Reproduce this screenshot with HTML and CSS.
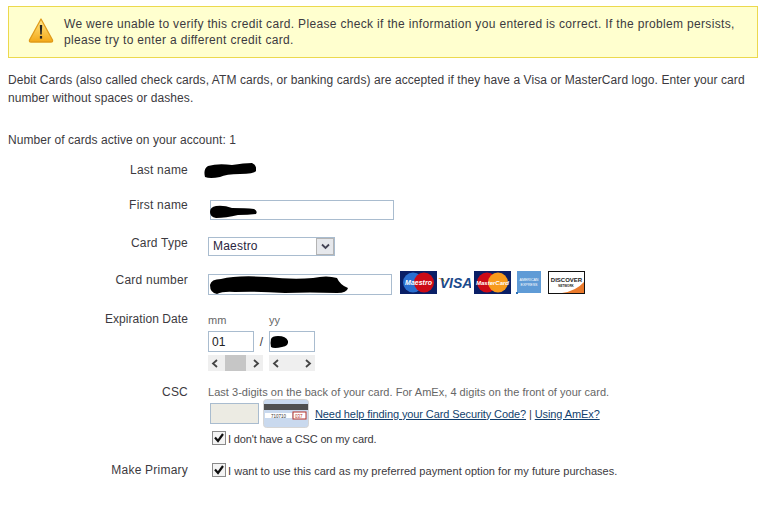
FILE: index.html
```html
<!DOCTYPE html>
<html>
<head>
<meta charset="utf-8">
<title>Add credit card</title>
<link rel="stylesheet" href="styles.css">
</head>
<body>
<div class="alert">
  <svg class="alert_icon" width="26" height="26" viewBox="0 0 26 26">
    <defs><linearGradient id="warn" x1="0" y1="0" x2="0" y2="1"><stop offset="0" stop-color="#ffe98a"/><stop offset="1" stop-color="#f4a817"/></linearGradient></defs>
    <path d="M13 2 L24.5 23 Q25 25 23 25 H3 Q1 25 1.5 23 Z" fill="url(#warn)" stroke="#e09a1a" stroke-width="1.3" stroke-linejoin="round"/>
    <path d="M11.8 8 H14.2 L13.7 17.5 H12.3 Z" fill="#222"/>
    <rect x="11.9" y="19" width="2.2" height="2.6" fill="#222"/>
  </svg>
  <p>We were unable to verify this credit card. Please check if the information you entered is correct. If the problem persists, please try to enter a different credit card.</p>
</div>

<p class="intro">Debit Cards (also called check cards, ATM cards, or banking cards) are accepted if they have a Visa or MasterCard logo. Enter your card number without spaces or dashes.</p>
<p class="count">Number of cards active on your account: 1</p>

<div class="row row_last">
  <div class="label">Last name</div>
  <div class="field">
    <svg class="scribble scribble_last" width="52" height="15" viewBox="0 0 52 15"><path d="M1 14 Q-1 6 4 3 Q14 0 28 2 Q40 0 48 0 Q53 2 52 8 Q50 11 36 11 Q22 11 16 14 Q6 16 1 14 Z"/></svg>
  </div>
</div>
<div class="row row_first">
  <div class="label">First name</div>
  <div class="field field_first">
    <input class="text_in in_first" type="text">
    <svg class="scribble scribble_first" width="47" height="13" viewBox="0 0 47 13"><path d="M0 7 Q0 2 6 1 Q14 0 22 3 Q36 3 44 4 Q48 6 46 9 Q38 10 28 10 Q16 13 6 13 Q0 12 0 7 Z"/></svg>
  </div>
</div>
<div class="row row_type">
  <div class="label">Card Type</div>
  <div class="field field_type">
    <div class="select">
      <span class="select_val">Maestro</span>
      <span class="select_btn"><svg width="9" height="7" viewBox="0 0 9 7"><path d="M1 1.5 L4.5 5 L8 1.5" fill="none" stroke="#445" stroke-width="1.8"/></svg></span>
    </div>
  </div>
</div>
<div class="row row_number">
  <div class="label">Card number</div>
  <div class="field field_number">
    <input class="text_in in_number" type="text">
    <svg class="scribble scribble_number" width="140" height="20" viewBox="0 0 140 20"><path d="M1 10 Q2 4 12 4 Q28 0 58 2 Q84 5 104 3 Q118 0 128 3 Q131 10 139 13 Q138 18 128 18 Q100 17 76 18 Q48 16 26 17 Q14 16 8 19 Q1 18 1 10 Z"/></svg>
    <div class="logos">
      <svg width="37" height="23" viewBox="0 0 37 23">
        <rect width="37" height="23" fill="#0a1f66"/>
        <circle cx="13" cy="11.5" r="10" fill="#2a6fd0"/><circle cx="24" cy="11.5" r="10" fill="#cc0a16"/>
        <text x="18.5" y="14" class="logo_txt" font-size="7" fill="#fff" text-anchor="middle">Maestro</text>
      </svg>
      <svg class="logo_vs" width="33" height="23" viewBox="0 0 33 23">
        <path d="M0 7 L5 7 L7 11 Z" fill="#f0a81e"/>
        <text x="18" y="17" class="logo_visa">VISA</text>
      </svg>
      <svg class="logo_mc" width="37" height="23" viewBox="0 0 37 23">
        <rect width="37" height="23" fill="#0a1f66"/>
        <circle cx="13" cy="11.5" r="10" fill="#cc0a16"/><circle cx="24" cy="11.5" r="10" fill="#f79a1c"/>
        <text x="18.5" y="14" class="logo_txt" font-size="6" fill="#fff" text-anchor="middle">MasterCard</text>
      </svg>
      <svg class="logo_amex" width="26" height="23" viewBox="0 0 26 23">
        <rect x="1" width="24" height="22" fill="#5f9bd6"/>
        <rect x="0" y="21" width="2" height="2" fill="#2a6fb5"/>
        <text x="13" y="10" font-size="3.6" fill="#fff" text-anchor="middle" class="logo_plain">AMERICAN</text>
        <text x="13" y="15" font-size="3.6" fill="#fff" text-anchor="middle" class="logo_plain">EXPRESS</text>
      </svg>
      <svg class="logo_disc" width="37" height="23" viewBox="0 0 37 23">
        <rect x="0.5" y="0.5" width="36" height="22" fill="#fff" stroke="#111"/>
        <path d="M36 11 V22 H14 Q28 20 36 11 Z" fill="#ea7a2c"/>
        <text x="18.5" y="11" font-size="6" font-weight="bold" fill="#222" text-anchor="middle" class="logo_plain">DISCOVER</text>
        <text x="18" y="16" font-size="3" font-weight="bold" fill="#222" text-anchor="middle" class="logo_plain">NETWORK</text>
      </svg>
    </div>
  </div>
</div>
<div class="row row_exp">
  <div class="label label_exp">Expiration Date</div>
  <div class="field">
    <div class="exp_heads"><span class="small_text exp_mm">mm</span><span class="small_text">yy</span></div>
    <div class="exp_inputs">
      <input class="text_in in_exp" type="text" value="01">
      <span class="slash">/</span>
      <div class="yy_wrap">
        <input class="text_in in_exp" type="text">
        <svg class="scribble scribble_yy" width="19" height="13" viewBox="0 0 19 13"><path d="M1 3 Q2 0 8 0 Q16 0 18 5 Q19 10 12 11 Q4 13 1 11 Q0 7 1 3 Z"/></svg>
      </div>
    </div>
    <div class="exp_bars">
      <div class="hbar hbar_mm">
        <svg width="8" height="9" viewBox="0 0 8 9"><path d="M6 1 L2 4.5 L6 8" fill="none" stroke="#444" stroke-width="1.8"/></svg>
        <span class="hbar_thumb"></span>
        <svg width="8" height="9" viewBox="0 0 8 9"><path d="M2 1 L6 4.5 L2 8" fill="none" stroke="#444" stroke-width="1.8"/></svg>
      </div>
      <div class="hbar hbar_yy">
        <svg width="8" height="9" viewBox="0 0 8 9"><path d="M6 1 L2 4.5 L6 8" fill="none" stroke="#444" stroke-width="1.8"/></svg>
        <svg width="8" height="9" viewBox="0 0 8 9"><path d="M2 1 L6 4.5 L2 8" fill="none" stroke="#444" stroke-width="1.8"/></svg>
      </div>
    </div>
  </div>
</div>
<div class="row row_csc">
  <div class="label">CSC</div>
  <div class="field">
    <div class="small_text csc_hint">Last 3-digits on the back of your card. For AmEx, 4 digits on the front of your card.</div>
    <div class="csc_line">
      <input class="text_in in_csc" type="text" disabled>
      <svg class="csc_card" width="46" height="29" viewBox="0 0 46 29">
        <rect x="0.5" y="0.5" width="45" height="28" rx="3" fill="#c9d9ee" stroke="#d5d5d5"/>
        <rect x="1" y="5" width="44" height="6" fill="#505050"/>
        <rect x="2" y="14" width="27" height="5" fill="#fff"/>
        <text x="8" y="18.5" class="logo_plain" font-size="4.5" fill="#333">710710</text>
        <rect x="30" y="13" width="13" height="7" fill="#fff" stroke="#b5322a"/>
        <text x="32" y="18.5" class="logo_plain" font-size="4.5" fill="#b5322a">037</text>
      </svg>
      <span class="csc_links"><a href="#">Need help finding your Card Security Code?</a> | <a href="#">Using AmEx?</a></span>
    </div>
    <div class="check_line">
      <svg class="check" width="14" height="14" viewBox="0 0 14 14"><rect x="0.5" y="0.5" width="13" height="13" fill="#f4f4f4" stroke="#8a8a8a"/><path d="M3 6.5 L6 10 L11 3" fill="none" stroke="#111" stroke-width="2.2"/></svg>
      <span class="check_txt check_csc">I don't have a CSC on my card.</span>
    </div>
  </div>
</div>
<div class="row">
  <div class="label">Make Primary</div>
  <div class="field">
    <div class="check_line check_primary">
      <svg class="check" width="14" height="14" viewBox="0 0 14 14"><rect x="0.5" y="0.5" width="13" height="13" fill="#f4f4f4" stroke="#8a8a8a"/><path d="M3 6.5 L6 10 L11 3" fill="none" stroke="#111" stroke-width="2.2"/></svg>
      <span class="check_txt">I want to use this card as my preferred payment option for my future purchases.</span>
    </div>
  </div>
</div>
</body>
</html>
```

FILE: styles.css
```css
body {
	margin: 0;
	padding: 6px 8px 0 8px;
	font-family: "Liberation Sans", Arial, sans-serif;
	font-size: 12px;
	color: #3c3a40;
	background: #fff;
}
p {
	margin: 0;
}
.alert {
	display: flex;
	align-items: center;
	box-sizing: border-box;
	width: 750px;
	height: 52px;
	padding: 0 8px 0 19px;
	border: 1px solid #ecd94e;
	background: #ffffcf;
}
.alert_icon {
	flex: none;
	margin-top: -5px;
}
.alert p {
	margin-left: 10px;
	line-height: 16px;
	letter-spacing: 0.33px;
}
.intro {
	margin-top: 13px;
	line-height: 18px;
	letter-spacing: 0.08px;
	width: 745px;
}
.count {
	margin-top: 25px;
	line-height: 16px;
	letter-spacing: 0.06px;
}
.row {
	display: flex;
	align-items: flex-start;
}
.label {
	width: 180px;
	margin-right: 20px;
	text-align: right;
	line-height: 16px;
	letter-spacing: 0.22px;
	flex: none;
}
.label_exp {
	letter-spacing: 0.07px;
}
.field {
	position: relative;
	flex: none;
}
.row_last {
	margin-top: 14px;
	margin-bottom: 19px;
	height: 16px;
}
.row_first {
	margin-bottom: 15px;
}
.row_type, .row_number {
	margin-bottom: 16px;
}
.row_exp {
	margin-bottom: 13px;
}
.row_csc {
	margin-bottom: 16px;
}
.field_first {
	padding: 3px 0 0 2px;
}
.field_type, .field_number {
	display: flex;
	padding-top: 2px;
}
.text_in {
	display: block;
	box-sizing: border-box;
	margin: 0;
	padding: 0 3px;
	border: 1px solid #a9bccf;
	font-family: inherit;
	font-size: 12px;
	color: #222;
	background: #fff;
}
.in_first {
	width: 184px;
	height: 20px;
}
.in_number {
	width: 184px;
	height: 21px;
}
.in_exp {
	width: 46px;
	height: 21px;
}
.in_csc {
	width: 49px;
	height: 21px;
	margin-left: 2px;
	background: #ecebe3;
}
.scribble {
	position: absolute;
	fill: #000;
}
.scribble_last {
	left: -4px;
	top: 1px;
}
.scribble_first {
	left: 2px;
	top: 8px;
}
.scribble_number {
	left: 1px;
	top: 3px;
}
.scribble_yy {
	left: 1px;
	top: 5px;
}
.select {
	display: flex;
	box-sizing: border-box;
	width: 127px;
	height: 19px;
	border: 1px solid #a9bccf;
}
.select_val {
	flex: 1;
	padding-left: 4px;
	line-height: 17px;
	color: #2a2540;
	letter-spacing: 0.2px;
}
.select_btn {
	display: flex;
	align-items: center;
	justify-content: center;
	width: 16px;
	border: 1px solid #b4b4b4;
	background: #e6e8ec;
}
.logos {
	display: flex;
	margin: -3px 0 0 8px;
}
.logos svg {
	display: block;
	flex: none;
}
.logos .logo_vs {
	margin-left: 1px;
}
.logos .logo_mc {
	margin-left: 3px;
}
.logos .logo_amex {
	margin-left: 5px;
}
.logos .logo_disc {
	margin-left: 6px;
}
.logo_txt {
	font-family: "Liberation Sans", Arial, sans-serif;
	font-weight: bold;
	font-style: italic;
}
.logo_plain {
	font-family: "Liberation Sans", Arial, sans-serif;
}
.logo_visa {
	font-family: "Liberation Sans", Arial, sans-serif;
	font-size: 14px;
	font-weight: bold;
	font-style: italic;
	fill: #1a4a8c;
	text-anchor: middle;
}
.small_text {
	font-size: 11px;
	color: #666;
}
.exp_heads {
	display: flex;
	height: 20px;
	padding-top: 1px;
	box-sizing: border-box;
	line-height: 16px;
}
.exp_mm {
	width: 61px;
}
.exp_inputs {
	display: flex;
	align-items: center;
}
.slash {
	width: 15px;
	text-align: center;
}
.yy_wrap {
	position: relative;
}
.exp_bars {
	display: flex;
	margin-top: 3px;
}
.hbar {
	display: flex;
	align-items: center;
	justify-content: space-between;
	box-sizing: border-box;
	height: 16px;
	padding: 0 3px;
	background: #efefef;
}
.hbar_mm {
	width: 55px;
}
.hbar_yy {
	width: 46px;
	margin-left: 6px;
}
.hbar_thumb {
	width: 21px;
	height: 16px;
	background: #c6c6c6;
}
.csc_hint {
	line-height: 16px;
	letter-spacing: 0.03px;
}
.csc_line {
	display: flex;
	align-items: center;
	margin-top: -1px;
	height: 29px;
}
.csc_card {
	margin-left: 4px;
	flex: none;
}
.csc_links {
	margin-left: 6px;
	font-size: 11px;
	letter-spacing: -0.1px;
	color: #3c3a40;
}
.csc_links a {
	color: #123f6d;
}
.check_line {
	display: flex;
	align-items: center;
	height: 16px;
	margin: 2px 0 0 4px;
}
.check_primary {
	margin-top: 0;
}
.check {
	flex: none;
}
.check_txt {
	margin-left: 2px;
	font-size: 11px;
	letter-spacing: 0.03px;
	position: relative;
	top: 1px;
}
.check_csc {
	letter-spacing: -0.14px;
}
```
